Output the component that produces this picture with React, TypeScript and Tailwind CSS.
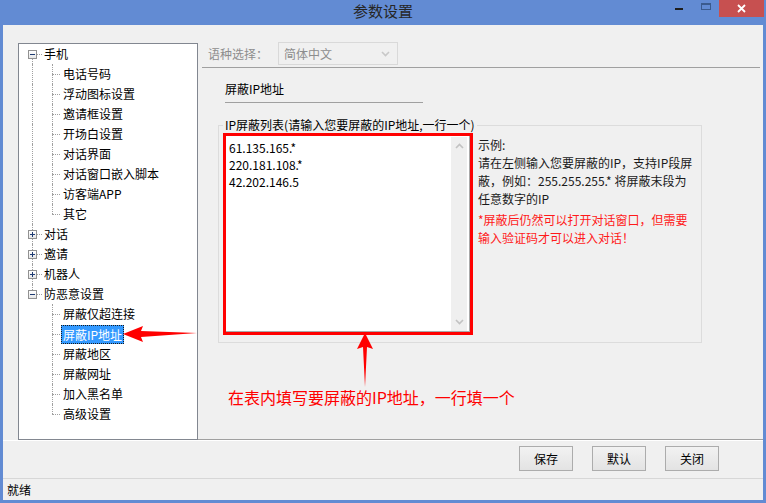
// 参数设置 — 屏蔽IP地址 设置页
const FONT = { fontFamily: '"Noto Sans CJK SC", "Noto Sans", sans-serif' };

type Node = { label: string; children?: string[] };

const TREE: Node[] = [
  {
    label: "手机",
    children: ["电话号码", "浮动图标设置", "邀请框设置", "开场白设置", "对话界面", "对话窗口嵌入脚本", "访客端APP", "其它"],
  },
  { label: "对话" },
  { label: "邀请" },
  { label: "机器人" },
  {
    label: "防恶意设置",
    children: ["屏蔽仅超连接", "屏蔽IP地址", "屏蔽地区", "屏蔽网址", "加入黑名单", "高级设置"],
  },
];

const SELECTED = "屏蔽IP地址";

function Expander({ open }: { open: boolean }) {
  return (
    <div className="absolute left-[9px] top-[6px] flex h-[9px] w-[9px] items-center justify-center border border-[#919191] bg-gradient-to-b from-white to-[#e6e6e6]">
      <svg width="7" height="7" viewBox="0 0 7 7">
        <rect x="1" y="3" width="5" height="1" fill="#1e3b72" />
        {!open && <rect x="3" y="1" width="1" height="5" fill="#1e3b72" />}
      </svg>
    </div>
  );
}

function Tree() {
  return (
    <div className="mt-[18px] h-[397px] w-[180px] shrink-0 border border-[#828790] bg-white text-[12px] text-black">
      {TREE.map((n, i) => {
        const first = i === 0;
        const last = i === TREE.length - 1;
        return (
          <div key={n.label}>
            <div className="relative h-[20px]">
              {!first && <div className="absolute left-[13px] top-0 h-[6px] border-l border-dotted border-[#a0a0a0]" />}
              {!last && <div className="absolute left-[13px] top-[15px] h-[5px] border-l border-dotted border-[#a0a0a0]" />}
              <Expander open={!!n.children} />
              <div className="absolute left-[18px] top-[10px] w-[5px] border-t border-dotted border-[#a0a0a0]" />
              <span className="absolute left-[25px] top-0 leading-[20px]">{n.label}</span>
            </div>
            {n.children?.map((c, j) => {
              const lastChild = j === n.children!.length - 1;
              const sel = c === SELECTED;
              return (
                <div key={c} className="relative h-[20px]">
                  {!last && <div className="absolute left-[13px] top-0 h-[20px] border-l border-dotted border-[#a0a0a0]" />}
                  <div
                    className={`absolute left-[33px] top-0 border-l border-dotted border-[#a0a0a0] ${lastChild ? "h-[10px]" : "h-[20px]"}`}
                  />
                  <div className="absolute left-[33px] top-[10px] w-[8px] border-t border-dotted border-[#a0a0a0]" />
                  {sel ? (
                    <span className="absolute left-[42px] top-[1px] border border-dotted border-[#1a1a1a] bg-[#3399ff] px-[1px] leading-[17px] text-white">
                      {c}
                    </span>
                  ) : (
                    <span className="absolute left-[44px] top-0 leading-[20px]">{c}</span>
                  )}
                </div>
              );
            })}
          </div>
        );
      })}
    </div>
  );
}

function Chevron({ up, color = "#c2c2c2" }: { up?: boolean; color?: string }) {
  return (
    <svg width="9" height="6" viewBox="0 0 9 6">
      <path d={up ? "M1 5 L4.5 1.5 L8 5" : "M1 1 L4.5 4.5 L8 1"} fill="none" stroke={color} strokeWidth="1.6" />
    </svg>
  );
}

function RightPanel() {
  return (
    <div className="flex h-[415px] flex-1 flex-col border-b border-[#a0a0a0] text-[12px]">
      <div className="flex items-center pl-[10px] pt-[17px] text-[#8d8d8d]">
        <span className="w-[70px]">语种选择：</span>
        <div className="flex h-[23px] w-[120px] items-center justify-between border border-[#d9d9d9] bg-[#f0f0f0] pl-[5px] pr-[7px]">
          <span>简体中文</span>
          <Chevron color="#c8c8c8" />
        </div>
      </div>
      <div className="ml-[4px] mt-[2px] mr-[3px] border-t border-[#a0a0a0]" />

      <div className="ml-[27px] mt-[13px] w-[198px] border-b border-[#a0a0a0] pb-[5px] leading-[16px] text-black">
        屏蔽IP地址
      </div>

      <fieldset className="ml-[20px] mt-[14px] w-[484px] border border-[#dcdcdc] pb-[7px] pl-[4px]">
        <legend className="px-[2px] leading-[16px] text-black">IP屏蔽列表(请输入您要屏蔽的IP地址,一行一个)</legend>
        <div className="flex">
          <div className="h-[202px] w-[250px] shrink-0 border-[3px] border-[#ff0000]">
            <div className="flex h-full border-b border-r border-[#a9a9a9] bg-white pr-[2px] pt-[1px]">
              <div className="flex-1 pl-[3px] pt-[2px] leading-[17px] text-black">
                <div>61.135.165.*</div>
                <div>220.181.108.*</div>
                <div>42.202.146.5</div>
              </div>
              <div className="flex w-[16px] flex-col items-center justify-between bg-[#efefef] py-[6px]">
                <Chevron up />
                <Chevron />
              </div>
            </div>
          </div>
          <div className="ml-[5px] pt-[3px] leading-[18px] text-[#1a1a1a]">
            <div>示例:</div>
            <div>请在左侧输入您要屏蔽的IP，支持IP段屏</div>
            <div>蔽，例如：255.255.255.* 将屏蔽末段为</div>
            <div>任意数字的IP</div>
            <div className="mt-[3px] text-[#ff1a1a]">
              <div>*屏蔽后仍然可以打开对话窗口，但需要</div>
              <div>输入验证码才可以进入对话！</div>
            </div>
          </div>
        </div>
      </fieldset>

      <div className="ml-[30px] mt-[44px] text-[16px] leading-[20px] text-[#ff0000]">
        在表内填写要屏蔽的IP地址，一行填一个
      </div>
    </div>
  );
}

export default function App() {
  return (
    <div style={FONT} className="relative flex h-[503px] w-[766px] flex-col overflow-hidden bg-[#628bd3]">
      {/* 标题栏 */}
      <div className="relative flex h-[25px] shrink-0 items-start justify-center">
        <span className="mt-[1px] text-[15px] leading-[20px] text-[#262626]">参数设置</span>
        <div className="absolute right-[2px] top-0 flex items-start">
          <div className="mr-[18px] mt-[8px] h-[2px] w-[8px] bg-[#1e1e1e]" />
          <div className="mr-[8px] mt-[3px] h-[7px] w-[10px] border border-t-2 border-[#3b5b8e]" />
          <div className="flex h-[17px] w-[45px] items-center justify-center bg-[#c75050]">
            <svg width="9" height="9" viewBox="0 0 9 9">
              <path d="M1 1 L8 8 M8 1 L1 8" stroke="white" strokeWidth="1.8" />
            </svg>
          </div>
        </div>
      </div>

      {/* 窗口内容 */}
      <div className="mx-[3px] mb-[3px] flex flex-1 flex-col bg-[#f0f0f0]">
        <div className="flex pl-[15px]">
          <Tree />
          <RightPanel />
        </div>

        <div className="flex h-[38px] justify-end gap-[19px] border-t border-white pr-[44px] pt-[5px]">
          {["保存", "默认", "关闭"].map((b) => (
            <button
              key={b}
              className="h-[25px] w-[54px] border border-[#acacac] bg-gradient-to-b from-[#f2f2f2] to-[#e3e3e3] text-[12px] text-black"
            >
              {b}
            </button>
          ))}
        </div>

        <div className="flex flex-1 items-center border-t border-[#d7d7d7] pl-[4px] text-[12px] text-black">就绪</div>
      </div>

      {/* 标注箭头 */}
      <svg className="pointer-events-none absolute left-0 top-0" width="766" height="503">
        <polygon points="123,334 143,326 141,331 197,333 141,337 143,342" fill="#ff0000" />
        <polygon points="365,333 373,349 367,347 365,387 363,347 357,349" fill="#ff0000" />
      </svg>
    </div>
  );
}
